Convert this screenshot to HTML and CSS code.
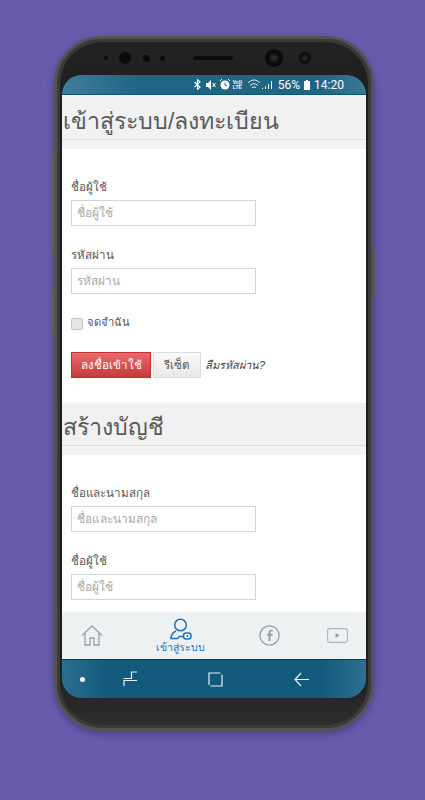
FILE: index.html
```html
<!DOCTYPE html>
<html lang="th">
<head>
    <meta charset="UTF-8">
    <meta name="viewport" content="width=device-width, initial-scale=1.0">
    <title>เข้าสู่ระบบ</title>
    <link rel="stylesheet" href="styles.css">
</head>
<body>

    <div class="phone">
        <span class="side-btn side-left-1"></span>
        <span class="side-btn side-left-2"></span>
        <span class="side-btn side-right"></span>

        <!-- Top bezel with sensors -->
        <div class="bezel-top">
            <span class="dot dot-xs"></span>
            <span class="dot dot-md"></span>
            <span class="dot dot-sm"></span>
            <span class="dot dot-xs2"></span>
            <span class="speaker"></span>
            <span class="dot dot-cam"></span>
            <span class="dot dot-sm2"></span>
        </div>

        <div class="screen">
            <!-- Status bar -->
            <div class="status-bar">
                <svg class="st-bt" width="7" height="11" viewBox="0 0 7 11"><path d="M.5 3l5.500 5-2.500 2.400V.6L6 3 .5 8" fill="none" stroke="#fff" stroke-width="1.100"/></svg>
                <svg class="st-mute" width="10" height="10" viewBox="0 0 10 10"><path d="M0 3h2l3-3v10L2 7H0z" fill="#fff"/><path d="M6.500 3l3 4M9.500 3l-3 4" stroke="#fff"/></svg>
                <svg class="st-alarm" width="10" height="11" viewBox="0 0 10 11"><circle cx="5" cy="6" r="4.500" fill="#fff"/><path d="M5 3.500V6l2 1" fill="none" stroke="#1f6584"/><path d="M0 2l2-2M10 2L8 0" stroke="#fff"/></svg>
                <span class="st-lte">Vo))<br>LTE</span>
                <svg class="st-wifi" width="24" height="11" viewBox="0 0 24 11"><path d="M0 4c4-4 8-4 12 0M2 6.500c3-2.300 5-2.300 8 0M4 8.700c1.500-1 2.500-1 4 0" fill="none" stroke="#fff" stroke-width=".9"/><path d="M14 9h1v1h-1zM17 7.500h1V10h-1zM20 5h1v5h-1zM23 2h1v8h-1z" fill="#fff"/></svg>
                <span class="st-text st-pct">56%</span>
                <svg class="st-batt" width="6" height="10" viewBox="0 0 6 10"><path d="M2 0h2v1h2v9H0V1h2z" fill="#fff"/></svg>
                <span class="st-text st-time">14:20</span>
            </div>

            <div class="app">
                <div class="content">
                    <h2 class="band-title">เข้าสู่ระบบ/ลงทะเบียน</h2>
                    <form class="form">
                        <div class="field">
                            <label>ชื่อผู้ใช้</label>
                            <input type="text" placeholder="ชื่อผู้ใช้">
                        </div>
                        <div class="field">
                            <label>รหัสผ่าน</label>
                            <input type="text" placeholder="รหัสผ่าน">
                        </div>
                        <div class="remember">
                            <span class="check"></span>
                            <span>จดจำฉัน</span>
                        </div>
                        <div class="actions">
                            <button type="button" class="btn btn-red">ลงชื่อเข้าใช้</button>
                            <button type="button" class="btn btn-grey">รีเซ็ต</button>
                            <a href="#" class="forgot">ลืมรหัสผ่าน?</a>
                        </div>
                    </form>

                    <h2 class="band-title band-second">สร้างบัญชี</h2>
                    <form class="form">
                        <div class="field">
                            <label>ชื่อและนามสกุล</label>
                            <input type="text" placeholder="ชื่อและนามสกุล">
                        </div>
                        <div class="field">
                            <label>ชื่อผู้ใช้</label>
                            <input type="text" placeholder="ชื่อผู้ใช้">
                        </div>
                    </form>
                </div>

                <!-- Bottom tabs -->
                <nav class="tabs">
                    <a href="#" class="tab tab-home">
                        <svg width="22" height="21" viewBox="0 0 22 21"><path d="M1 10.500L11 1l10 9.500M4 8.500V20h5v-7h4v7h5V8.500" fill="none" stroke="#93a5a8" stroke-width="1.300"/></svg>
                    </a>
                    <a href="#" class="tab tab-login">
                        <svg width="22" height="22" viewBox="0 0 22 22"><circle cx="10.500" cy="7" r="5.800" fill="none" stroke="#1b75bb" stroke-width="1.500"/><path d="M6 13C3 14.500 1 17 1 20.500h6.500l2-2H14" fill="none" stroke="#1b75bb" stroke-width="1.500"/><rect x="13.500" y="15" width="7.500" height="6" rx="2.500" fill="none" stroke="#1b75bb" stroke-width="1.500"/><circle cx="17.500" cy="18" r="1" fill="#1b75bb"/></svg>
                        <span>เข้าสู่ระบบ</span>
                    </a>
                    <a href="#" class="tab tab-fb">
                        <svg width="21" height="21" viewBox="0 0 21 21"><circle cx="10.500" cy="10.500" r="9.600" fill="none" stroke="#8fa3a6" stroke-width="1.300"/><path d="M11.500 16V10.800h2l.2-2h-2.200V7.500c0-.7.300-1 1-1h1.200V4.700h-1.700c-1.800 0-2.500 1-2.500 2.500v1.600H8v2h1.500V16z" fill="#8fa3a6"/></svg>
                    </a>
                    <a href="#" class="tab tab-yt">
                        <svg width="21" height="15" viewBox="0 0 21 15"><rect x=".6" y=".6" width="19.800" height="13.800" rx="2.500" fill="none" stroke="#a9b8ba" stroke-width="1.100"/><path d="M8.500 5l4 2.500-4 2.500z" fill="#8fa3a6"/></svg>
                    </a>
                </nav>
            </div>

            <!-- Android nav bar -->
            <div class="nav-bar">
                <span class="nav-dot"></span>
                <svg class="nav-recent" width="16" height="16" viewBox="0 0 16 16"><path d="M15 1H9.500v6.500H1.500M15 9.500H2V15" fill="none" stroke="#e8f0f3" stroke-width="1.200"/></svg>
                <svg class="nav-home" width="15" height="15" viewBox="0 0 15 15"><path d="M1 13V1h11.500M14 2.500V14H2.500" fill="none" stroke="#e8f0f3" stroke-width="1.200"/></svg>
                <svg width="15" height="15" viewBox="0 0 15 15"><path d="M7 1L1 7.500 7 14M1 7.500h14" fill="none" stroke="#e8f0f3" stroke-width="1.200"/></svg>
            </div>
        </div>
    </div>

</body>
</html>
```

FILE: styles.css
```css
body {
    margin: 0;
    height: 800px;
    overflow: hidden;
    background-color: #675cab;
    font-family: "Liberation Sans", "Noto Sans", sans-serif;
    color: #444;
}
.phone {
    position: relative;
    box-sizing: border-box;
    width: 320px;
    height: 695px;
    margin: 36px 0 0 54px;
    padding: 0 5px;
    background: linear-gradient(to bottom, #232323, #1e1e1e 10%, #201d1a 90%, #2e2e2e);
    border: 3px solid #535353;
    border-radius: 48px;
    box-shadow: inset 0 0 0 3px #3a3a3a, 0 3px 7px rgba(30, 20, 80, 0.4);
}
.side-btn {
    position: absolute;
    width: 2px;
    background-color: #5e5e5e;
}
.side-left-1 { left: -5px; top: 114px; height: 100px; }
.side-left-2 { left: -5px; top: 251px; height: 45px; }
.side-right { right: -5px; top: 211px; height: 46px; }

/* Bezel */
.bezel-top {
    height: 36px;
    box-sizing: border-box;
    display: flex;
    align-items: center;
    padding: 2px 0 0 42px;
}
.dot {
    border-radius: 50%;
    background-color: #0a0a0a;
}
.dot-xs { width: 4px; height: 4px; margin-right: 11px; }
.dot-md { width: 12px; height: 12px; margin-right: 12px; }
.dot-sm { width: 7px; height: 7px; margin-right: 10px; }
.dot-xs2 { width: 5px; height: 5px; margin-right: 28px; }
.speaker {
    width: 40px;
    height: 4px;
    border-radius: 2px;
    background-color: #0c0c0c;
    margin-right: 32px;
}
.dot-cam {
    width: 18px;
    height: 18px;
    margin-right: 16px;
    background: radial-gradient(circle, #333 0, #0a0a0a 45%);
}
.dot-sm2 {
    width: 12px;
    height: 12px;
    background: radial-gradient(circle, #2e2e2e 0, #0c0c0c 55%);
}

.screen {
    height: 623px;
    border-radius: 20px;
    overflow: hidden;
    display: flex;
    flex-direction: column;
    background-color: #125a7c;
}

/* Status bar */
.status-bar {
    height: 19px;
    flex: none;
    display: flex;
    align-items: center;
    justify-content: flex-end;
    padding-right: 22px;
    background: linear-gradient(to right, #3f7f9c, #1f6584 25%, #1f6584 85%, #3a7a96);
    border-bottom: 1px solid #0f5775;
    color: #fff;
}
.st-text {
    font-family: Roboto, sans-serif;
    font-size: 12px;
}
.st-mute { margin-left: 5px; }
.st-alarm { margin-left: 4px; }
.st-lte {
    width: 9px;
    margin-left: 3px;
    font-size: 5px;
    line-height: 5px;
    font-weight: bold;
    text-align: center;
    white-space: nowrap;
}
.st-wifi { margin-left: 6px; }
.st-pct { margin-left: 6px; }
.st-batt { margin-left: 4px; }
.st-time { margin-left: 4px; }

/* App area */
.app {
    height: 565px;
    flex: none;
    display: flex;
    flex-direction: column;
    background-color: #fff;
}
.content {
    flex: 1;
    overflow: hidden;
}
.band-title {
    margin: 0;
    height: 54px;
    box-sizing: border-box;
    padding: 9px 0 0 1px;
    font-size: 23.2px;
    line-height: 35px;
    font-weight: normal;
    color: #5a5a5a;
    background: linear-gradient(to bottom, #f1f1f1 44px, #dcdcdc 44px, #dcdcdc 45px, #f3f3f3 45px);
}
.band-second {
    height: 52px;
    padding-top: 7px;
    background: linear-gradient(to bottom, #f1f1f1 42px, #dcdcdc 42px, #dcdcdc 43px, #f3f3f3 43px);
}
.form {
    padding: 27px 9px 25px;
}
.field {
    margin-bottom: 18px;
}
.field label {
    display: block;
    height: 24px;
    font-size: 11.6px;
    line-height: 22px;
    color: #555;
}
.field input {
    display: block;
    box-sizing: border-box;
    width: 185px;
    height: 26px;
    margin: 0;
    padding: 0 5px;
    border: 1px solid #d4d4d4;
    font-family: inherit;
    font-size: 12px;
}
.field input::placeholder {
    color: #aaa;
}
.remember {
    display: flex;
    align-items: center;
    gap: 4px;
    height: 20px;
    font-size: 11.2px;
    color: #555;
}
.check {
    width: 10px;
    height: 10px;
    margin-top: 4px;
    border: 1px solid #c4c4c4;
    border-radius: 2px;
    background-color: #e6e6e6;
}
.actions {
    display: flex;
    align-items: center;
    margin-top: 20px;
    height: 26px;
}
.btn {
    height: 26px;
    padding: 0;
    font-family: inherit;
    font-size: 11.6px;
    border: 1px solid #ddd;
}
.btn-red {
    width: 80px;
    color: #fff;
    border-color: #c9302c;
    background: linear-gradient(to bottom, #e76b6b, #c73a3a);
}
.btn-grey {
    width: 48px;
    margin-left: 2px;
    color: #555;
    background: linear-gradient(to bottom, #fafafa, #e8e8e8);
}
.forgot {
    margin-left: 4px;
    font-size: 11px;
    font-style: italic;
    color: #444;
    text-decoration: none;
}

/* Tabs */
.tabs {
    height: 47px;
    flex: none;
    display: flex;
    background-color: #edf1f2;
    border-bottom: 1px solid #0c3c52;
}
.tab {
    display: flex;
    flex-direction: column;
    align-items: center;
    justify-content: center;
    text-decoration: none;
    font-size: 10.6px;
    color: #1b75bb;
}
.tab-home { width: 60px; }
.tab-login { width: 117px; }
.tab-login span { line-height: 12px; margin-top: 1px; }
.tab-fb { width: 60px; }
.tab-yt { width: 57px; margin-left: 10px; }

/* Android nav bar */
.nav-bar {
    flex: 1;
    display: flex;
    align-items: center;
    padding-left: 18px;
    background: linear-gradient(to right, #2b6f8e, #115a7c 15%, #115a7c 85%, #2e7090);
}
.nav-dot {
    width: 5px;
    height: 5px;
    margin-right: 37px;
    border-radius: 50%;
    background-color: #fff;
}
.nav-recent { margin-right: 70px; }
.nav-home { margin-right: 71px; }
```
